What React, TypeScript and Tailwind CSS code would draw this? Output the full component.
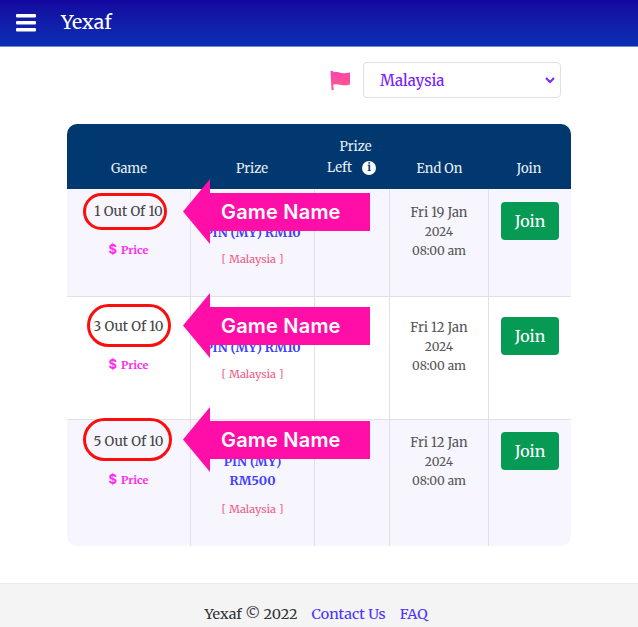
const serif = "font-['Merriweather','DejaVu_Serif',serif]";

const rows = [
  { game: '1 Out Of 10', prize: ['PIN (MY) RM10'], end: 'Fri 19 Jan', row: 'h-[107px] bg-[#f7f6fe]', pad: 'pt-[14px]', prizePad: 'pt-[34px]', tagGap: 'mt-[9px]', joinPad: 'pt-[13px]', dates: 'pt-[14px]', arrow: 'top-[-10px]', oval: 'left-[16px] top-[4px] w-[84px] h-[37px]' },
  { game: '3 Out Of 10', prize: ['PIN (MY) RM10'], end: 'Fri 12 Jan', row: 'h-[123px] bg-white border-t border-[#e0e0e6]', pad: 'pt-[21px]', prizePad: 'pt-[41px]', tagGap: 'mt-[9px]', joinPad: 'pt-[20px]', dates: 'pt-[21px]', arrow: 'top-[-4px]', oval: 'left-[20px] top-[7px] w-[84px] h-[43px]' },
  { game: '5 Out Of 10', prize: ['PIN (MY)', 'RM500'], end: 'Fri 12 Jan', row: 'h-[127px] bg-[#f7f6fe] border-t border-[#e0e0e6]', pad: 'pt-[13px]', prizePad: 'pt-[32px]', tagGap: 'mt-[11px]', joinPad: 'pt-[12px]', dates: 'pt-[13px]', arrow: 'top-[-13px]', oval: 'left-[16px] top-[-2px] w-[89px] h-[43px]' },
];

function Arrow({ top }: { top: string }) {
  return (
    <div className={`absolute left-[116px] flex items-center ${top}`}>
      <svg width="27" height="65" viewBox="0 0 27 65" className="shrink-0">
        <path d="M27 0V65L0 32.5Z" fill="#ff0fa8" />
      </svg>
      <div className="w-[160px] h-[38px] bg-[#ff0fa8] text-white font-['Inter',sans-serif] font-semibold text-[20px] tracking-[0.2px] pl-[11px] flex items-center">
        Game Name
      </div>
    </div>
  );
}

export default function App() {
  return (
    <div className={`h-[627px] overflow-hidden bg-white flex flex-col ${serif}`}>
      {/* Header */}
      <header className="h-[47px] shrink-0 bg-gradient-to-b from-[#14069f] to-[#0b2eb4] border-b border-[#6f8ad6] flex items-center pl-4 gap-[25px]">
        <svg width="20" height="18" viewBox="0 0 20 18">
          <rect x="0" y="0" width="20" height="3.4" rx="1" fill="#fff" />
          <rect x="0" y="7" width="20" height="3.4" rx="1" fill="#fff" />
          <rect x="0" y="14" width="20" height="3.4" rx="1" fill="#fff" />
        </svg>
        <span className="text-white text-[19.5px]">Yexaf</span>
      </header>

      <main className="flex-1 flex flex-col">
        {/* Country select */}
        <div className="flex items-center mt-[15px] ml-[330px] gap-[12px]">
          <svg width="21" height="21" viewBox="0 0 21 21">
            <defs>
              <linearGradient id="flag" x1="0" y1="0" x2="0" y2="1">
                <stop offset="0" stopColor="#ff3fb0" />
                <stop offset="1" stopColor="#ff5f85" />
              </linearGradient>
            </defs>
            <path d="M0.5 1H3V2.5C6 1.5 8 2.3 11 3C14 3.7 17 3.3 20 2.5V14.5C17 15.5 14 15.5 11 15C8 14.3 6 14 3.2 14.8L3.8 20H1.5Z" fill="url(#flag)" />
          </svg>
          <div className="w-[198px] h-[36px] border border-[#dee2e6] rounded-[4px] pl-4 pr-[5px] flex items-center justify-between text-[#7a22ff] text-[15px] font-medium">
            <span className="translate-y-[1px]">Malaysia</span>
            <svg width="10" height="8" viewBox="0 0 10 8">
              <path d="M1 2L5 6L9 2" fill="none" stroke="#7a22ff" strokeWidth="2" />
            </svg>
          </div>
        </div>

        {/* Table */}
        <div className="mt-[26px] ml-[67px] w-[504px] rounded-[10px]">
          <div className="h-[65px] bg-[#00386f] rounded-t-[10px] flex text-[#e8eef5] text-[13px] text-center">
            <div className="w-[124px] self-end pb-[11px]">Game</div>
            <div className="w-[124px] self-end pb-[11px] pr-[2px]">Prize</div>
            <div className="w-[75px] self-end pb-[11px] leading-[21px]">
              <div className="pl-[6px]">Prize</div>
              <div className="flex items-center justify-center gap-[10px] pr-[2px]">
                Left
                <span className="w-[14px] h-[14px] rounded-full bg-white text-[#00386f] text-[11px] font-bold leading-none flex items-center justify-center">i</span>
              </div>
            </div>
            <div className="w-[99px] self-end pb-[11px]">End On</div>
            <div className="w-[82px] self-end pb-[11px] pr-[2px]">Join</div>
          </div>

          {rows.map((r, i) => (
            <div key={r.game} className={`relative flex text-center ${r.row} ${i === 2 ? 'rounded-b-[10px]' : ''}`}>
              <div className={`w-[124px] border-r border-[#e0e0e6] ${r.pad}`}>
                <div className="text-[#444] text-[13.5px] leading-[18px]">{r.game}</div>
                <div className="mt-[20px] text-[#ff2bf0] text-[11px] font-bold leading-[16px]">
                  <span className="font-['Inter',sans-serif] text-[13px] mr-[4px]">$</span>Price
                </div>
              </div>
              <div className={`w-[124px] border-r border-[#e0e0e6] px-2 ${r.prizePad}`}>
                <div className="text-[#3f3fff] text-[12.6px] font-bold leading-[19px]">
                  {r.prize.map((p) => <div key={p}>{p}</div>)}
                </div>
                <div className={`text-[#ee5f87] text-[11px] leading-[17px] ${r.tagGap}`}>[ Malaysia ]</div>
              </div>
              <div className="w-[75px] border-r border-[#e0e0e6]" />
              <div className={`w-[99px] border-r border-[#e0e0e6] text-[#555] text-[12px] leading-[19px] ${r.dates}`}>
                <span className="text-[13px]">{r.end}</span>
                <br />2024
                <br />08:00 am
              </div>
              <div className={`w-[82px] flex justify-center items-start ${r.joinPad}`}>
                <button className="w-[58px] h-[38px] bg-[#069a54] text-white text-[16px] rounded-[4px]">Join</button>
              </div>

              {/* Annotations */}
              <div className={`absolute border-[3px] border-[#fa0f0f] rounded-full ${r.oval}`} />
              <Arrow top={r.arrow} />
            </div>
          ))}
        </div>

        {/* Footer */}
        <footer className="mt-auto h-[44px] bg-[#f4f4f5] border-t border-[#ebebeb] flex justify-center gap-[14px] pt-[21px] pr-[6px] text-[14.4px] leading-[19px] text-[#333]">
          <span>Yexaf © 2022</span>
          <a className="text-[#4a33ff]">Contact Us</a>
          <a className="text-[#4a33ff]">FAQ</a>
        </footer>
      </main>
    </div>
  );
}
